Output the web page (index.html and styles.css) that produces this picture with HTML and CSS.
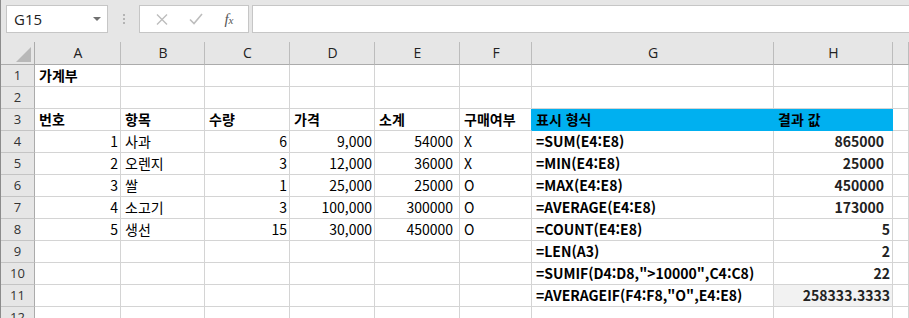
FILE: index.html
```html
<!DOCTYPE html>
<html lang="ko">
<head>
  <meta charset="UTF-8">
  <meta name="viewport" content="width=device-width, initial-scale=1.0">
  <title>가계부</title>
  <link rel="stylesheet" href="styles.css">
</head>
<body>
  <div class="formula-bar">
    <div class="name-box">
      <span>G15</span>
      <span class="caret"></span>
    </div>
    <div class="grip"><i></i><i></i><i></i></div>
    <div class="fx-buttons">
      <svg width="12" height="11" viewBox="0 0 12 11"><path d="M1 0.5 L11 10.5 M11 0.5 L1 10.5" stroke="#bdbdbd" stroke-width="1.4" fill="none"/></svg>
      <svg width="14" height="12" viewBox="0 0 14 12"><path d="M1 6.5 L5 10.5 L13 1" stroke="#bdbdbd" stroke-width="1.6" fill="none"/></svg>
      <span class="fx">f<small>x</small></span>
    </div>
    <div class="formula-input"></div>
  </div>

  <div class="sheet">
    <div class="row col-head">
      <div class="corner"><span class="tri"></span></div>
      <div>A</div><div>B</div><div>C</div><div>D</div><div>E</div><div>F</div><div>G</div><div>H</div><div></div>
    </div>

    <div class="row">
      <div class="rh">1</div>
      <div class="bold">가계부</div><div></div><div></div><div></div><div></div><div></div><div></div><div></div><div></div>
    </div>
    <div class="row">
      <div class="rh">2</div>
      <div></div><div></div><div></div><div></div><div></div><div></div><div></div><div></div><div></div>
    </div>
    <div class="row">
      <div class="rh">3</div>
      <div class="bold">번호</div><div class="bold">항목</div><div class="bold">수량</div><div class="bold">가격</div><div class="bold">소계</div><div class="bold edge-blue">구매여부</div>
      <div class="bold blue">표시 형식</div><div class="bold blue">결과 값</div><div></div>
    </div>
    <div class="row">
      <div class="rh">4</div>
      <div class="num">1</div><div>사과</div><div class="num">6</div><div class="num">9,000</div><div class="num sub">54000</div><div>X</div>
      <div class="bold">=SUM(E4:E8)</div><div class="result wide">865000</div><div></div>
    </div>
    <div class="row">
      <div class="rh">5</div>
      <div class="num">2</div><div>오렌지</div><div class="num">3</div><div class="num">12,000</div><div class="num sub">36000</div><div>X</div>
      <div class="bold">=MIN(E4:E8)</div><div class="result wide">25000</div><div></div>
    </div>
    <div class="row">
      <div class="rh">6</div>
      <div class="num">3</div><div>쌀</div><div class="num">1</div><div class="num">25,000</div><div class="num sub">25000</div><div>O</div>
      <div class="bold">=MAX(E4:E8)</div><div class="result wide">450000</div><div></div>
    </div>
    <div class="row">
      <div class="rh">7</div>
      <div class="num">4</div><div>소고기</div><div class="num">3</div><div class="num">100,000</div><div class="num sub">300000</div><div>O</div>
      <div class="bold">=AVERAGE(E4:E8)</div><div class="result wide">173000</div><div></div>
    </div>
    <div class="row">
      <div class="rh">8</div>
      <div class="num">5</div><div>생선</div><div class="num">15</div><div class="num">30,000</div><div class="num sub">450000</div><div>O</div>
      <div class="bold">=COUNT(E4:E8)</div><div class="result">5</div><div></div>
    </div>
    <div class="row">
      <div class="rh">9</div>
      <div></div><div></div><div></div><div></div><div></div><div></div>
      <div class="bold">=LEN(A3)</div><div class="result">2</div><div></div>
    </div>
    <div class="row">
      <div class="rh">10</div>
      <div></div><div></div><div></div><div></div><div></div><div></div>
      <div class="bold">=SUMIF(D4:D8,"&gt;10000",C4:C8)</div><div class="result">22</div><div></div>
    </div>
    <div class="row">
      <div class="rh">11</div>
      <div></div><div></div><div></div><div></div><div></div><div></div>
      <div class="bold">=AVERAGEIF(F4:F8,"O",E4:E8)</div><div class="result picked">258333.3333</div><div></div>
    </div>
    <div class="row">
      <div class="rh">12</div>
      <div></div><div></div><div></div><div></div><div></div><div></div><div></div><div></div><div></div>
    </div>
  </div>
</body>
</html>
```

FILE: styles.css
```css
body {
  margin: 0;
  border-left: 1px solid #8c8c8c;
  background-color: #e6e6e6;
  font-family: "Noto Sans CJK KR", "Noto Sans", sans-serif;
  color: #000;
  overflow: hidden;
  height: 318px;
}

/* formula bar */
.formula-bar {
  display: flex;
  align-items: flex-start;
  height: 42px;
  padding: 5px 0 0 5px;
  box-sizing: border-box;
}
.name-box {
  width: 102px;
  height: 28px;
  box-sizing: border-box;
  background-color: white;
  border: 1px solid #c6c6c6;
  display: flex;
  align-items: center;
  justify-content: space-between;
  padding: 0 6px 0 7px;
  font-family: "Open Sans", "Noto Sans", sans-serif;
  font-size: 15px;
  color: #222;
}
.caret {
  width: 0;
  height: 0;
  border-left: 4px solid transparent;
  border-right: 4px solid transparent;
  border-top: 4px solid #707070;
}
.grip {
  width: 31px;
  display: flex;
  flex-direction: column;
  align-items: center;
  gap: 2px;
  padding-top: 9px;
}
.grip i {
  display: block;
  width: 2px;
  height: 2px;
  background-color: #b4b4b4;
}
.fx-buttons {
  width: 110px;
  height: 28px;
  box-sizing: border-box;
  background-color: white;
  border: 1px solid #c6c6c6;
  display: flex;
  align-items: center;
  justify-content: space-around;
  padding: 0 4px 0 6px;
}
.fx {
  font-family: "Liberation Serif", serif;
  font-style: italic;
  font-size: 15px;
  color: #555;
}
.fx small {
  font-size: 11px;
}
.formula-input {
  flex: 1;
  margin-left: 3px;
  margin-right: -2px;
  height: 28px;
  box-sizing: border-box;
  background-color: white;
  border: 1px solid #c6c6c6;
}

/* grid */
.sheet {
  background-color: white;
}
.row {
  display: grid;
  grid-template-columns: 34px 86px 84px 85px 85px 85px 72px 242px 119px 1fr;
  height: 22px;
}
.row > div {
  box-sizing: border-box;
  border-right: 1px solid #d4d4d4;
  border-bottom: 1px solid #d4d4d4;
  font-size: 14px;
  line-height: 20px;
  padding: 0 3px 0 4px;
  white-space: nowrap;
  overflow: visible;
}
.col-head {
  height: 23px;
  background-color: #e6e6e6;
}
.row.col-head > div {
  border-right-color: #bcbcbc;
  border-bottom-color: #ababab;
  text-align: center;
  font-family: "Open Sans", "Noto Sans", sans-serif;
  font-size: 14px;
  line-height: 22px;
  color: #222;
}
.row > .rh,
.row.col-head > .corner {
  background-color: #e6e6e6;
  border-right-color: #ababab;
  border-bottom-color: #c4c4c4;
  text-align: center;
  font-family: "Open Sans", "Noto Sans", sans-serif;
  font-size: 13px;
  line-height: 21px;
  color: #333;
  padding: 0;
}
.row.col-head > .corner {
  position: relative;
  border-bottom-color: #ababab;
}
.tri {
  position: absolute;
  right: 3px;
  bottom: 2px;
  width: 0;
  height: 0;
  border-left: 15px solid transparent;
  border-bottom: 15px solid #b8b8b8;
}
.bold {
  font-weight: bold;
}
.num {
  text-align: right;
  padding-right: 2px !important;
}
.num.sub {
  padding-right: 6px !important;
}
.row > .blue {
  background-color: #00b0f0;
  border-color: #00b0f0;
}
.row > .edge-blue {
  border-right-color: #00b0f0;
}
.result {
  text-align: right;
  font-weight: bold;
  color: #222;
  padding-right: 2px !important;
}
.result.wide {
  padding-right: 8px !important;
}
.picked {
  background-color: #f2f2f2;
}
```
